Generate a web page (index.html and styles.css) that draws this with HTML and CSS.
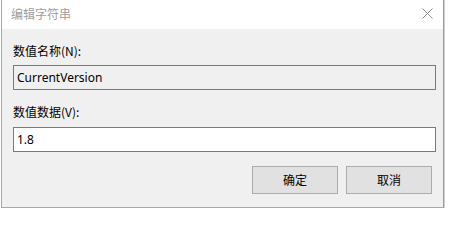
FILE: index.html
```html
<!DOCTYPE html>
<html lang="zh-CN">
<head>
<meta charset="utf-8">
<title>编辑字符串</title>
<link rel="stylesheet" href="styles.css">
</head>
<body>
<div class="dialog">
  <div class="titlebar">
    <span class="title">编辑字符串</span>
    <span class="close" aria-label="关闭">
      <svg width="11" height="11" viewBox="0 0 11 11"><path d="M0.5 0.5 L10.5 10.5 M10.5 0.5 L0.5 10.5" stroke="#8a8a8a" stroke-width="1" fill="none"/></svg>
    </span>
  </div>
  <div class="content">
    <div class="label first">数值名称(N):</div>
    <div class="field readonly">CurrentVersion</div>
    <div class="label second">数值数据(V):</div>
    <div class="field editable">1.8</div>
    <div class="buttons">
      <div class="btn">确定</div>
      <div class="btn">取消</div>
    </div>
  </div>
</div>
</body>
</html>
```
FILE: styles.css
```css
html, body {
  margin: 0;
  padding: 0;
  background: #ffffff;
}
body {
  font-family: "Segoe UI", "Noto Sans", "Noto Sans CJK SC", sans-serif;
  font-size: 12px;
  color: #000;
}
.dialog {
  margin-left: 1px;
  width: 441px;
  height: 207px;
  border-left: 1px solid #a8a8a8;
  border-right: 1px solid #9c9c9c;
  border-bottom: 1px solid #a8a8a8;
  box-shadow: 1px 0 0 #d0d0d0;
  display: flex;
  flex-direction: column;
  background: #f0f0f0;
}
.titlebar {
  height: 29px;
  background: #ffffff;
  display: flex;
  align-items: center;
  justify-content: space-between;
  padding: 0 10px 0 9px;
}
.title {
  color: #a0a0a0;
  font-family: "Noto Sans CJK SC", sans-serif;
  font-size: 12px;
  line-height: 16px;
  margin-top: -2px;
}
.close {
  display: flex;
  width: 11px;
  height: 11px;
  margin-top: -2px;
}
.content {
  flex: 1;
  padding: 14px 10px 0 11px;
  display: flex;
  flex-direction: column;
}
.label {
  line-height: 16px;
  height: 16px;
  font-family: "Noto Sans CJK SC", sans-serif;
}
.label.second {
  margin-top: 14px;
}
.field {
  margin-top: 6px;
  height: 23px;
  width: 418px;
  border: 1px solid #7a7a7a;
  display: flex;
  align-items: center;
  padding-left: 3px;
  box-sizing: content-box;
  line-height: 16px;
}
.field.readonly {
  background: #f0f0f0;
}
.field.editable {
  background: #ffffff;
  margin-top: 7px;
}
.buttons {
  margin-top: 14px;
  display: flex;
  justify-content: flex-end;
  gap: 8px;
  padding-right: 1px;
}
.btn {
  width: 84px;
  height: 26px;
  border: 1px solid #adadad;
  background: #e1e1e1;
  display: flex;
  align-items: center;
  justify-content: center;
  font-family: "Noto Sans CJK SC", sans-serif;
  line-height: 16px;
}
```
